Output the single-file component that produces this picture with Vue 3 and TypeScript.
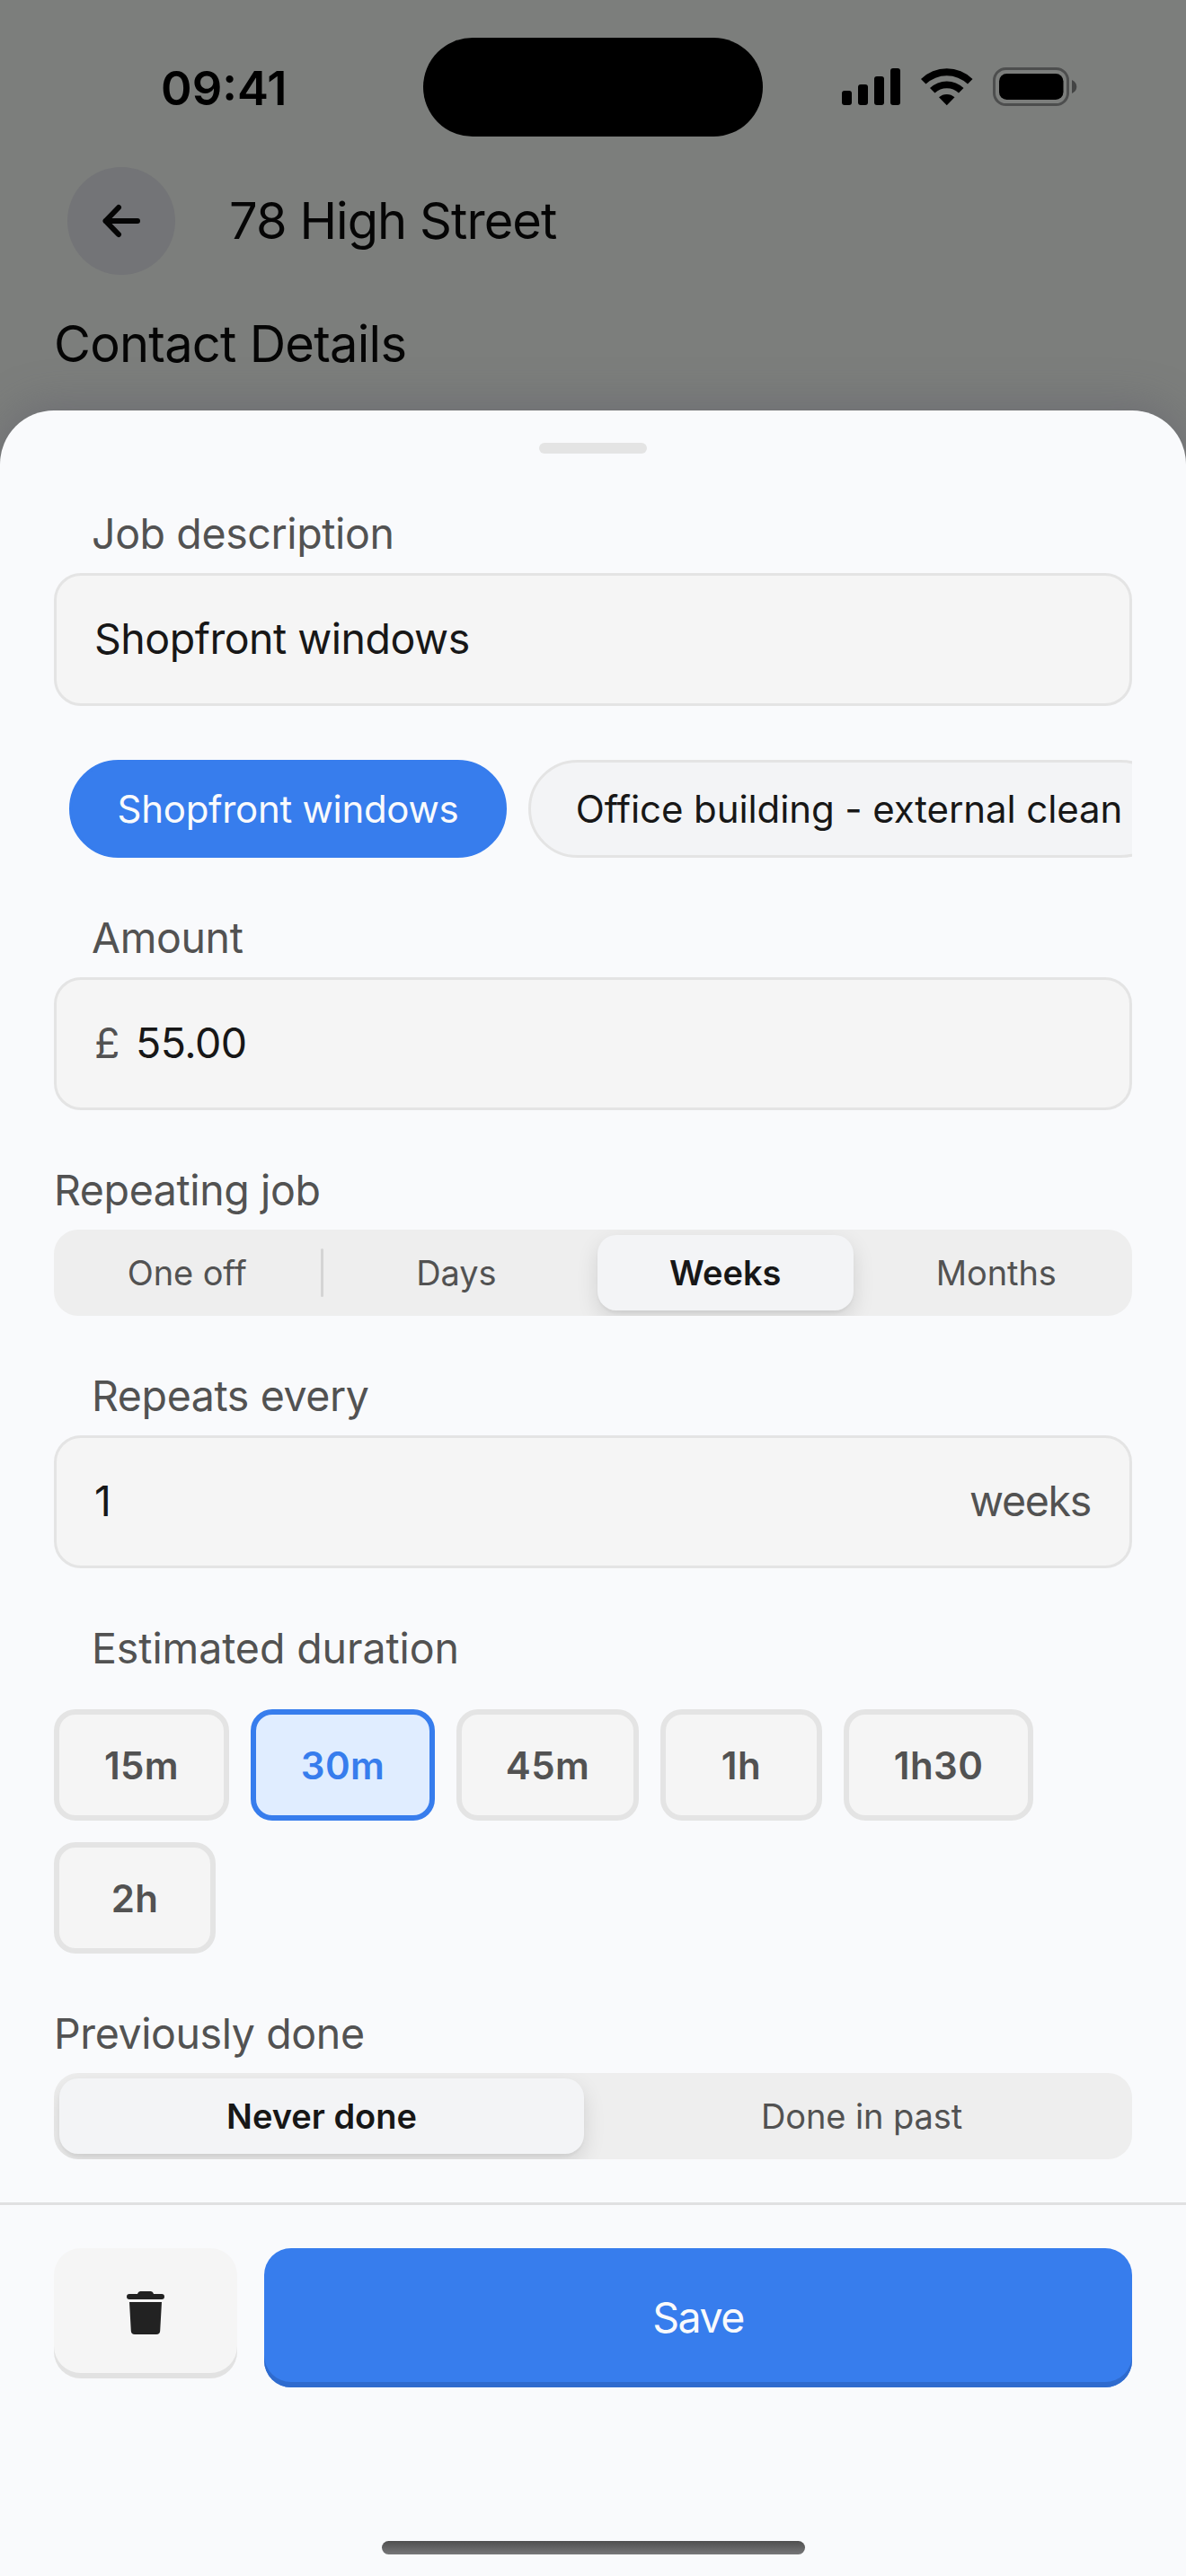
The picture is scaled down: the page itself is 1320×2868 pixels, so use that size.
<script setup lang="ts">
import { ref } from 'vue'

interface Option {
  label: string
  width?: number
}

const description = ref('Shopfront windows')
const suggestions: Option[] = [
  { label: 'Shopfront windows', width: 487 },
  { label: 'Office building - external clean', width: 714 },
]

const repeatOptions = ['One off', 'Days', 'Weeks', 'Months']
const repeat = ref('Weeks')

const durations: Option[] = [
  { label: '15m', width: 195 },
  { label: '30m', width: 205 },
  { label: '45m', width: 203 },
  { label: '1h', width: 180 },
  { label: '1h30', width: 211 },
  { label: '2h', width: 180 },
]
const duration = ref('30m')

const historyOptions = ['Never done', 'Done in past']
const history = ref('Never done')
</script>

<template>
  <div class="screen">
    <header class="backdrop">
      <div class="status">
        <span class="time">09:41</span>
        <div class="island"></div>
        <svg class="status-icons" width="264" height="48" viewBox="935 72 264 48">
          <rect x="937" y="101" width="11" height="16" rx="3" />
          <rect x="955" y="94" width="11" height="23" rx="3" />
          <rect x="973" y="85" width="11" height="32" rx="3" />
          <rect x="991" y="76" width="11" height="41" rx="3" />
          <path d="M1025 88 A41 41 0 0 1 1082.500 88 L1077 93.500 A34 34 0 0 0 1030.500 93.500 Z" />
          <path d="M1035 98 A27 27 0 0 1 1072.500 98 L1067 103.500 A19.500 19.500 0 0 0 1040.500 103.500 Z" />
          <path d="M1045 108.300 A13 13 0 0 1 1062.500 108.300 L1053.750 117.200 Z" />
          <rect x="1106.500" y="76.500" width="82" height="40" rx="13" fill="none" stroke="#4d4e4e" stroke-width="3" />
          <rect x="1112" y="82" width="71.500" height="29" rx="8.500" />
          <path d="M1193 89 Q1198.300 91.500 1198.300 96.500 Q1198.300 101.500 1193 104 Z" fill="#434444" />
        </svg>
      </div>
      <div class="nav">
        <button class="back" aria-label="Back">
          <svg width="48" height="48" viewBox="0 0 48 48" fill="none" stroke="#050505" stroke-width="6" stroke-linecap="round" stroke-linejoin="round">
            <path d="M42 24H6.500M21 9L6.500 24L21 39" />
          </svg>
        </button>
        <h1 class="title">78 High Street</h1>
      </div>
      <h2 class="section">Contact Details</h2>
    </header>

    <main class="sheet">
      <div class="handle"></div>

      <div class="form">
        <div class="field">
          <label class="label inset">Job description</label>
          <div class="input"><span class="value">{{ description }}</span></div>
        </div>

        <div class="suggestions">
          <button
            v-for="s in suggestions"
            :key="s.label"
            class="pill"
            :class="{ active: s.label === description }"
            :style="{ width: s.width + 'px' }"
          >{{ s.label }}</button>
        </div>

        <div class="field">
          <label class="label inset">Amount</label>
          <div class="input">
            <span class="prefix">£</span>
            <span class="value amount">55.00</span>
          </div>
        </div>

        <div class="field">
          <label class="label">Repeating job</label>
          <div class="segments">
            <button
              v-for="(o, i) in repeatOptions"
              :key="o"
              class="segment"
              :class="{ selected: o === repeat, divided: i === 0 }"
            >{{ o }}</button>
          </div>
        </div>

        <div class="field">
          <label class="label inset">Repeats every</label>
          <div class="input">
            <span class="value">1</span>
            <span class="suffix">weeks</span>
          </div>
        </div>

        <div class="field">
          <label class="label inset loose">Estimated duration</label>
          <div class="durations">
            <button
              v-for="d in durations"
              :key="d.label"
              class="duration"
              :class="{ active: d.label === duration }"
              :style="{ width: d.width + 'px' }"
            >{{ d.label }}</button>
          </div>
        </div>

        <div class="field">
          <label class="label">Previously done</label>
          <div class="segments">
            <button
              v-for="o in historyOptions"
              :key="o"
              class="segment"
              :class="{ selected: o === history }"
            >{{ o }}</button>
          </div>
        </div>
      </div>

      <footer class="actions">
        <button class="delete" aria-label="Delete">
          <svg width="42" height="48" viewBox="0 0 42 48" fill="#222">
            <path d="M12 3 Q13 0 15.500 0 H26.500 Q29 0 30 3 H39 A3 3 0 0 1 39 9 H3 A3 3 0 0 1 3 3 Z" />
            <path d="M3 12 H39 L37.200 44 Q37 48 33 48 H9 Q5 48 4.800 44 Z" />
          </svg>
        </button>
        <button class="save">Save</button>
      </footer>

      <div class="home-indicator"></div>
    </main>
  </div>
</template>

<style>
body {
  margin: 0;
}
</style>

<style scoped>
* {
  box-sizing: border-box;
}

button {
  font: inherit;
  padding: 0;
  border: 0;
  letter-spacing: inherit;
  white-space: nowrap;
}

.screen {
  width: 1320px;
  height: 2868px;
  overflow: hidden;
  display: flex;
  flex-direction: column;
  background: #7c7e7c;
  font-family: Inter, "Liberation Sans", sans-serif;
  color: #171717;
}

.backdrop {
  height: 457px;
  flex: none;
  color: #050505;
}

.status {
  height: 186px;
  padding: 42px 121px 0 179px;
  display: flex;
  align-items: flex-start;
}

.time {
  width: 292px;
  line-height: 112px;
  font-size: 52.5px;
  font-weight: 600;
  color: #000;
}

.island {
  width: 378px;
  height: 110px;
  border-radius: 55px;
  background: #000;
}

.status-icons {
  margin: 30px 0 0 86px;
  flex: none;
}

.nav {
  display: flex;
  align-items: center;
  gap: 60px;
  height: 120px;
  padding-left: 75px;
}

.back {
  width: 120px;
  height: 120px;
  border-radius: 50%;
  background: #737477;
  display: flex;
  align-items: center;
  justify-content: center;
}

.title,
.section {
  margin: 0;
  font-size: 56px;
  font-weight: 400;
  letter-spacing: -0.95px;
}

.section {
  padding-left: 60px;
  margin-top: 43px;
  line-height: 68px;
  letter-spacing: -0.75px;
}

.sheet {
  flex: 1;
  display: flex;
  flex-direction: column;
  border-radius: 60px 60px 0 0;
  background: #f9fafc;
  box-shadow: 0 -6px 48px rgba(90, 90, 105, 0.45);
}

.handle {
  width: 120px;
  height: 12px;
  margin: 36px auto 57px;
  flex: none;
  border-radius: 6px;
  background: #e4e4e4;
}

.form {
  display: flex;
  flex-direction: column;
  gap: 57px;
  padding: 0 60px 48px;
}

.field {
  display: flex;
  flex-direction: column;
}

.label {
  height: 76px;
  line-height: 64px;
  font-size: 46.5px;
  letter-spacing: -0.4px;
  color: #525252;
}

.loose {
  letter-spacing: -0.1px;
}

.inset {
  padding-left: 42px;
}

.input {
  height: 148px;
  padding: 0 42px 2px;
  display: flex;
  align-items: center;
  border: 3px solid #e4e4e4;
  border-radius: 30px;
  background: #f5f5f5;
  font-size: 46.5px;
  letter-spacing: -0.5px;
}

.prefix,
.suffix {
  color: #525252;
}

.suffix {
  margin-left: auto;
  margin-right: 1px;
  letter-spacing: -1.3px;
}

.amount {
  margin-left: 18px;
}

.suggestions {
  margin-top: 3px;
  padding-left: 17px;
  display: flex;
  gap: 24px;
  overflow: hidden;
}

.pill {
  height: 109px;
  flex: none;
  border: 3px solid #e4e4e4;
  border-radius: 55px;
  background: #f3f4f6;
  color: #171717;
  font-size: 42px;
  letter-spacing: -0.1px;
}

.pill.active {
  border-color: #377ded;
  background: #377ded;
  color: #f9fafc;
  letter-spacing: -0.3px;
}

.segments {
  height: 96px;
  padding: 6px 9px 6px 6px;
  display: flex;
  gap: 15px;
  overflow: hidden;
  border-radius: 27px;
  background: #eee;
}

.segment {
  position: relative;
  flex: 1 1 0;
  height: 84px;
  border-radius: 21px;
  background: transparent;
  color: #525252;
  font-size: 38px;
  letter-spacing: -0.1px;
}

.segment:last-child {
  padding-left: 2px;
}

.segment.selected {
  background: #f3f4f6;
  color: #171717;
  font-weight: 600;
  letter-spacing: 0;
  box-shadow: 0 9px 24px rgba(0, 0, 0, 0.12), 0 3px 3px rgba(0, 0, 0, 0.04);
}

.divided::after {
  content: '';
  position: absolute;
  top: 15px;
  right: -9px;
  width: 3px;
  height: 54px;
  border-radius: 2px;
  background: #d4d4d4;
}

.durations {
  display: flex;
  flex-wrap: wrap;
  gap: 24px;
  margin-top: 24px;
}

.duration {
  height: 124px;
  border: 6px solid #e4e4e4;
  border-radius: 24px;
  background: #f5f5f5;
  color: #525252;
  font-size: 42px;
  font-weight: 600;
  letter-spacing: 0.4px;
}

.duration.active {
  border-color: #377ded;
  background: #e0edff;
  color: #377ded;
}

.actions {
  display: flex;
  align-items: flex-start;
  gap: 30px;
  padding: 48px 60px 0;
  border-top: 3px solid #e0e0e1;
}

.delete {
  width: 204px;
  height: 145px;
  padding-bottom: 1px;
  border-radius: 30px;
  background: #f5f5f5;
  box-shadow: inset 0 -6px 0 #e2e2e2;
  display: flex;
  align-items: center;
  justify-content: center;
}

.save {
  flex: 1;
  height: 155px;
  padding-bottom: 2px;
  border-radius: 30px;
  background: #377ded;
  box-shadow: inset 0 -6px 0 #2f6bce;
  color: #f9fafc;
  font-size: 46.5px;
  letter-spacing: -1.5px;
}

.home-indicator {
  width: 471px;
  height: 15px;
  margin: auto auto 24px;
  border-radius: 8px;
  background: linear-gradient(#4f4f4f, #777779);
}
</style>
